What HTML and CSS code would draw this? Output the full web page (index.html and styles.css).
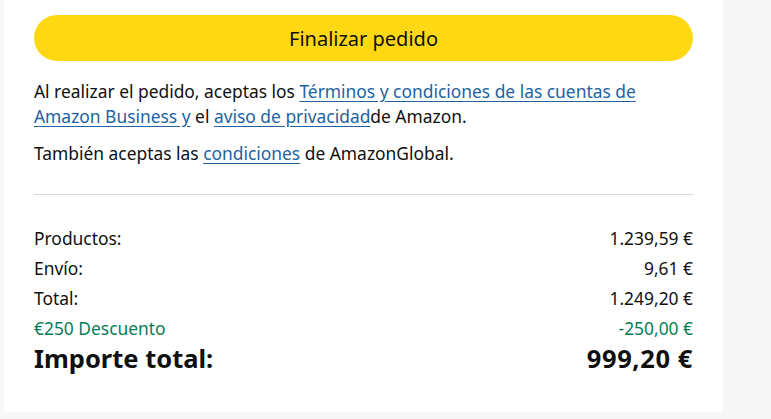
FILE: index.html
```html
<!DOCTYPE html>
<html lang="es">
<head>
<meta charset="utf-8">
<link rel="stylesheet" href="styles.css">
</head>
<body>
<div class="page">
  <div class="card">
    <button class="place-order">Finalizar pedido</button>
    <p class="legal">Al realizar el pedido, aceptas los <a href="#">Términos y condiciones de las cuentas de</a> <a href="#">Amazon Business y</a> el <a href="#">aviso de privacidad</a>de Amazon.</p>
    <p class="legal legal-2">También aceptas las <a href="#">condiciones</a> de AmazonGlobal.</p>
    <hr class="divider">
    <div class="summary">
      <div class="row"><span>Productos:</span><span>1.239,59 €</span></div>
      <div class="row"><span>Envío:</span><span>9,61 €</span></div>
      <div class="row"><span>Total:</span><span>1.249,20 €</span></div>
      <div class="row discount"><span>€250 Descuento</span><span>-250,00 €</span></div>
      <div class="row grand"><span>Importe total:</span><span class="grand-amount">999,20 €</span></div>
    </div>
  </div>
</div>
</body>
</html>
```
FILE: styles.css
```css
* { box-sizing: border-box; }
html, body { margin: 0; padding: 0; }
body {
  background: #f7f7f7;
  font-family: "Noto Sans", "Open Sans", sans-serif;
  color: #0f1111;
}
.page {
  padding: 0 0 7px 4px;
}
.card {
  width: 719px;
  height: 412px;
  background: #fff;
  padding: 15px 30px 0 30px;
}
.place-order {
  display: block;
  width: 100%;
  height: 46px;
  border: none;
  border-radius: 23px;
  background: #ffd814;
  color: #0f1111;
  font-family: inherit;
  font-size: 20px;
  padding: 0;
}
.legal {
  margin: 18px 0 0 0;
  font-size: 17.4px;
  line-height: 25px;
}
.legal-2 { margin-top: 12px; }
.legal a {
  color: #2162a1;
  text-decoration: underline;
  text-underline-offset: 3px;
}
.divider {
  margin: 28px 0 0 0;
  border: none;
  border-top: 1px solid #d5d9d9;
  height: 0;
}
.summary {
  margin-top: 28px;
}
.row {
  display: flex;
  justify-content: space-between;
  font-size: 17.4px;
  line-height: 30px;
}
.discount { color: #077d55; }
.grand {
  font-size: 25.5px;
  font-weight: 700;
  line-height: 30px;
}
.grand-amount { letter-spacing: 0.6px; }
```
